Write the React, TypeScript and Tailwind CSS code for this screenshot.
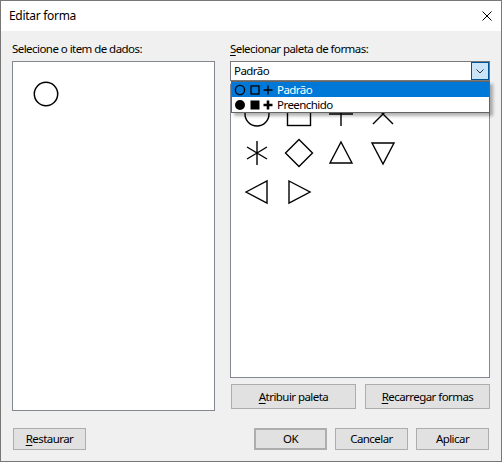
import React from "react";

const font = { fontFamily: '"Noto Sans", "Liberation Sans", sans-serif' };

function Btn({ children, className = "" }: { children: React.ReactNode; className?: string }) {
  return (
    <div
      className={
        "flex items-center justify-center border border-[#adadad] bg-[#e1e1e1] text-black " +
        className
      }
    >
      {children}
    </div>
  );
}

function Shape({ kind }: { kind: string }) {
  const s = { stroke: "#000", strokeWidth: 1.4, fill: "none" } as const;
  let el: React.ReactNode = null;
  switch (kind) {
    case "circle":
      el = <circle cx="15" cy="15" r="12" {...s} />;
      break;
    case "square":
      el = <rect x="3.5" y="3.5" width="23" height="23" {...s} />;
      break;
    case "plus":
      el = <path d="M15 3V27M3 15H27" {...s} />;
      break;
    case "x":
      el = <path d="M5 5L25 25M25 5L5 25" {...s} />;
      break;
    case "star":
      el = <path d="M15 3V27M5 9L25 21M25 9L5 21" {...s} />;
      break;
    case "diamond":
      el = <path d="M15 1.5L28.5 15L15 28.5L1.5 15Z" {...s} />;
      break;
    case "up":
      el = <path d="M15 4L26 25H4Z" {...s} />;
      break;
    case "down":
      el = <path d="M4 5H26L15 26Z" {...s} />;
      break;
    case "left":
      el = <path d="M4 15L25 4V26Z" {...s} />;
      break;
    case "right":
      el = <path d="M5 4L26 15L5 26Z" {...s} />;
      break;
  }
  return (
    <div className="flex h-[39px] w-[42px] items-center justify-center">
      <svg width="30" height="30" viewBox="0 0 30 30">
        {el}
      </svg>
    </div>
  );
}

export default function App() {
  return (
    <div
      className="relative flex h-[462px] w-[502px] flex-col border border-[#777777] bg-[#f0f0f0] text-[11.5px] tracking-[-0.55px] text-black"
      style={font}
    >
      {/* title bar */}
      <div className="flex h-[30px] shrink-0 items-center justify-between bg-white pl-[8px] pr-[9px]">
        <span className="text-[12px] leading-none tracking-[-0.3px]">Editar forma</span>
        <svg width="10" height="10" viewBox="0 0 10 10">
          <path d="M0.5 0.5L9.5 9.5M9.5 0.5L0.5 9.5" stroke="#000" strokeWidth="1" />
        </svg>
      </div>

      {/* body */}
      <div className="flex flex-1 flex-col px-[11px]">
        <div className="flex gap-[15px]">
          {/* left column */}
          <div className="flex w-[203px] flex-col">
            <div className="h-[30px] pt-[10px] leading-[15px]">Selecione o item de dados:</div>
            <div className="h-[350px] border border-[#828790] bg-white pl-[20px] pt-[19px]">
              <svg width="26" height="26" viewBox="0 0 26 26">
                <circle cx="13" cy="13" r="11.7" stroke="#000" strokeWidth="1.5" fill="none" />
              </svg>
            </div>
          </div>

          {/* right column */}
          <div className="relative flex w-[260px] flex-col">
            <div className="h-[30px] pt-[10px] leading-[15px]">
              <span className="underline underline-offset-2">S</span>elecionar paleta de formas:
            </div>
            {/* combobox */}
            <div className="flex h-[20px] items-stretch border border-[#7a7a7a] bg-white">
              <div className="flex flex-1 items-center pl-[3px]">Padrão</div>
              <div className="flex w-[18px] items-center justify-center border border-[#005499] bg-[#cce4f7]">
                <svg width="8" height="5" viewBox="0 0 8 5">
                  <path d="M0.5 0.5L4 4L7.5 0.5" stroke="#333" strokeWidth="1" fill="none" />
                </svg>
              </div>
            </div>
            {/* shape panel */}
            <div className="mt-[3px] h-[294px] border border-[#828790] bg-white pl-[5px] pt-[9px]">
              <div className="grid w-[168px] grid-cols-4">
                {["circle", "square", "plus", "x", "star", "diamond", "up", "down", "left", "right"].map((k) => (
                  <Shape key={k} kind={k} />
                ))}
              </div>
            </div>
            <div className="mt-[6px] flex gap-[9px] pl-[1px]">
              <Btn className="h-[25px] w-[125px]">
                <span>
                  <span className="underline underline-offset-2">A</span>tribuir paleta
                </span>
              </Btn>
              <Btn className="h-[25px] w-[125px]">
                <span>
                  <span className="underline underline-offset-2">R</span>ecarregar formas
                </span>
              </Btn>
            </div>

            {/* dropdown list */}
            <div className="absolute left-[1px] top-[50px] w-[259px] border border-[#646464] bg-white shadow-[3px_3px_3px_rgba(0,0,0,0.3)]">
              <div className="flex h-[15px] items-center bg-[#0078d7] pl-[2px] text-white">
                <svg width="42" height="12" viewBox="0 0 42 12" className="mr-[1px]">
                  <circle cx="6" cy="6" r="4.6" stroke="#000" strokeWidth="1.3" fill="none" />
                  <rect x="17" y="2" width="8" height="8" stroke="#000" strokeWidth="1.3" fill="none" />
                  <path d="M34 1.5V10.5M29.5 6H38.5" stroke="#000" strokeWidth="1.3" />
                </svg>
                <span className="leading-none">Padrão</span>
              </div>
              <div className="flex h-[15px] items-center pl-[2px]">
                <svg width="42" height="12" viewBox="0 0 42 12" className="mr-[1px]">
                  <circle cx="6" cy="6" r="5" fill="#000" />
                  <rect x="16.5" y="1.5" width="9" height="9" fill="#000" />
                  <path d="M34 1.5V10.5M29.5 6H38.5" stroke="#000" strokeWidth="2.6" />
                </svg>
                <span className="leading-none">Preenchido</span>
              </div>
            </div>
          </div>
        </div>

        {/* bottom row */}
        <div className="mt-[17px] flex items-center">
          <Btn className="ml-[1px] h-[22px] w-[73px]">
            <span>
              <span className="underline underline-offset-2">R</span>estaurar
            </span>
          </Btn>
          <div className="flex-1" />
          <Btn className="h-[22px] w-[73px] border-2 border-[#0078d7]">OK</Btn>
          <Btn className="ml-[8px] h-[22px] w-[73px]">Cancelar</Btn>
          <Btn className="ml-[8px] mr-[1px] h-[22px] w-[73px]">Aplicar</Btn>
        </div>
      </div>
    </div>
  );
}
